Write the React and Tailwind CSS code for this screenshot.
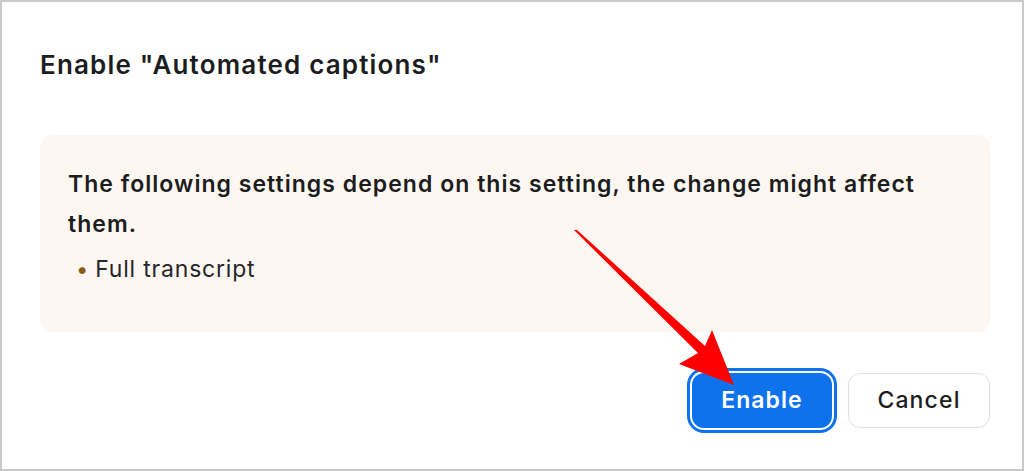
import React from "react";

function RedArrow() {
  return (
    <svg
      className="absolute left-0 top-0 pointer-events-none"
      width="1024"
      height="471"
      viewBox="0 0 1024 471"
    >
      <polygon
        points="572,228 575,228 703,344 710,328 732,383 677,362 696,351"
        fill="#ff0000"
      />
    </svg>
  );
}

export default function App() {
  return (
    <div
      className="relative w-[1024px] h-[471px] bg-white border-2 border-[#c9c9c9] overflow-hidden"
      style={{ fontFamily: "Inter, 'Open Sans', sans-serif" }}
    >
      <div className="flex flex-col pl-[38px] pr-[32px]">
        <h1 className="mt-[47px] text-[26px] leading-[32px] font-semibold tracking-[0.045em] text-[#1b1d21]">
          Enable "Automated captions"
        </h1>

        <div className="mt-[54px] rounded-xl bg-[#fef7f1] pl-[28px] pr-[60px] pt-[29px] pb-[47px]">
          <p className="text-[23px] leading-[40px] font-semibold tracking-[0.045em] text-[#1b1d21]">
            The following settings depend on this setting, the change might affect them.
          </p>
          <ul className="mt-[9px] pl-[8px]">
            <li className="flex items-center gap-[6px] text-[23px] leading-[32px] tracking-[0.035em] text-[#24262b]">
              <span className="text-[#8a5a1a] text-[22px] leading-none">•</span>
              <span>Full transcript</span>
            </li>
          </ul>
        </div>

        <div className="mt-[41px] flex justify-end gap-[16px]">
          <button className="h-[55px] w-[140px] rounded-xl bg-[#0e72ed] text-white text-[23px] font-semibold tracking-[0.045em] ring-[3px] ring-[#0e72ed] ring-offset-2 ring-offset-white">
            Enable
          </button>
          <button className="h-[55px] w-[142px] rounded-xl bg-white border border-[#dde1e7] text-[#1b1d21] text-[23px] font-medium tracking-[0.05em]">
            Cancel
          </button>
        </div>
      </div>
      <RedArrow />
    </div>
  );
}
